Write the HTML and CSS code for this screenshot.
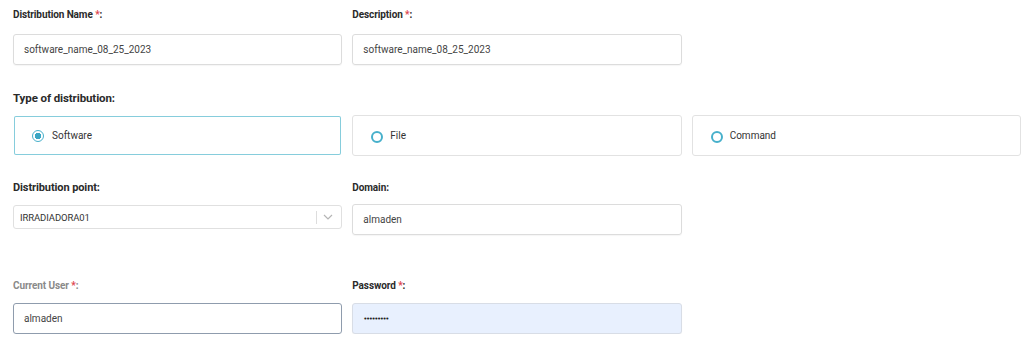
FILE: index.html
```html
<!DOCTYPE html>
<html lang="en">
<head>
  <meta charset="UTF-8">
  <title>New Distribution</title>
  <link rel="stylesheet" href="styles.css">
</head>
<body>
  <form class="dist-form">
    <div class="row row-names">
      <div class="field">
        <label class="label">Distribution Name <span class="req">*</span>:</label>
        <div class="input">software_name_08_25_2023</div>
      </div>
      <div class="field">
        <label class="label">Description <span class="req">*</span>:</label>
        <div class="input">software_name_08_25_2023</div>
      </div>
    </div>

    <div class="type-block">
      <div class="label label-lg">Type of distribution:</div>
      <div class="row">
        <div class="radio-card is-checked">
          <span class="radio"></span>
          <span>Software</span>
        </div>
        <div class="radio-card">
          <span class="radio"></span>
          <span>File</span>
        </div>
        <div class="radio-card">
          <span class="radio"></span>
          <span>Command</span>
        </div>
      </div>
    </div>

    <div class="row row-point">
      <div class="field">
        <label class="label label-lg">Distribution point:</label>
        <div class="select">
          <span class="select-value">IRRADIADORA01</span>
          <span class="select-sep"></span>
          <svg class="chevron" width="10" height="6" viewBox="0 0 10 6"><path d="M1 1l4 4 4-4" fill="none" stroke="#b5b5b5" stroke-width="1.2"/></svg>
        </div>
      </div>
      <div class="field">
        <label class="label">Domain:</label>
        <div class="input">almaden</div>
      </div>
    </div>

    <div class="row row-user">
      <div class="field">
        <label class="label muted">Current User <span class="req">*</span>:</label>
        <div class="input focused">almaden</div>
      </div>
      <div class="field">
        <label class="label">Password <span class="req">*</span>:</label>
        <div class="input autofill"><span class="dots">&bull;&bull;&bull;&bull;&bull;&bull;&bull;&bull;&bull;</span></div>
      </div>
    </div>
  </form>
</body>
</html>
```

FILE: styles.css
```css
* {
  margin: 0;
  padding: 0;
  box-sizing: border-box;
  font-family: Roboto, 'Liberation Sans', sans-serif;
}

body {
  background: #fff;
  color: #333;
}

.dist-form {
  padding: 8px 3px 0 13px;
}

.row {
  display: grid;
  grid-template-columns: repeat(3, 1fr);
  gap: 10px;
}

.field {
  display: flex;
  flex-direction: column;
}

.label {
  display: block;
  font-size: 10px;
  font-weight: 700;
  color: #2a2a2a;
  line-height: 14px;
  margin-bottom: 12px;
  letter-spacing: -0.1px;
}

.label-lg {
  font-size: 11.5px;
  margin-bottom: 10px;
}

.req {
  color: #e0454f;
}

.input {
  height: 31px;
  border: 1px solid #dcdcdc;
  border-radius: 3px;
  padding: 0 10px;
  display: flex;
  align-items: center;
  font-size: 10px;
  color: #444;
  box-shadow: 0 1px 1px rgba(0, 0, 0, 0.04);
}

.input.focused {
  border-color: #8f9cad;
}

.input.autofill {
  background: #e8f0fe;
  border-color: #d8dde6;
}

.dots {
  font-family: 'DejaVu Sans', sans-serif;
  font-size: 7px;
  letter-spacing: -1.4px;
  color: #222;
}

.type-block {
  margin-top: 26px;
}

.radio-card {
  height: 41px;
  border: 1px solid #e2e2e2;
  border-radius: 3px;
  display: flex;
  align-items: center;
  padding-left: 18px;
  gap: 7px;
  font-size: 10px;
  color: #333;
}

.radio-card.is-checked {
  border-color: transparent;
  box-shadow: inset 0 0 0 1px #86cddc;
  gap: 8px;
}

.radio {
  width: 12px;
  height: 12px;
  border: 2px solid #47b0cb;
  border-radius: 50%;
  margin-top: 2px;
}

.is-checked .radio {
  border-width: 1.5px;
  background: radial-gradient(circle, #3aa6c4 3px, transparent 3.5px);
  margin-top: 0;
}

.row-point {
  margin-top: 25px;
}

.row-point .label-lg {
  font-size: 11px;
}

.row-point .field:first-child .label {
  margin-bottom: 10px;
}

.row-point .field:nth-child(2) .label {
  margin-bottom: 9px;
}

.select {
  height: 24px;
  border: 1px solid #e0e0e0;
  border-radius: 3px;
  display: flex;
  align-items: center;
  padding: 0 8px 0 6px;
  font-size: 9.5px;
  color: #333;
}

.select-value {
  flex: 1;
  letter-spacing: -0.1px;
}

.select-sep {
  width: 1px;
  height: 13px;
  background: #ddd;
  margin-right: 6px;
}

.row-user {
  margin-top: 44px;
}

.row-user .label {
  margin-bottom: 10px;
}

.label.muted {
  color: #8a8a8a;
}
```
